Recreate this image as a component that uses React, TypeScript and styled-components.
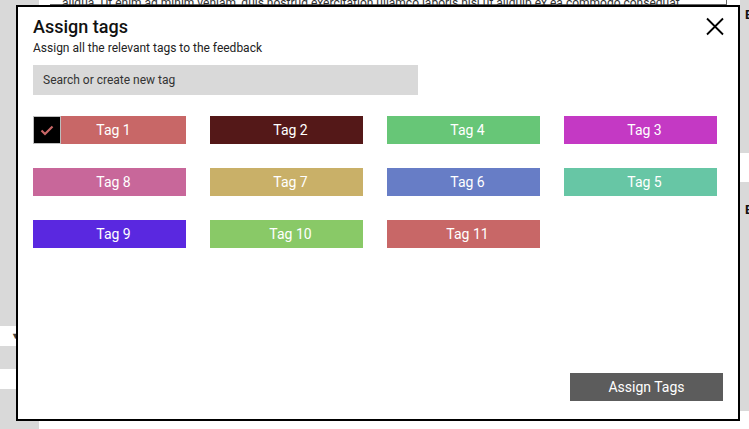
import React, { useState } from 'react'
import styled, { createGlobalStyle } from 'styled-components'

const GlobalStyle = createGlobalStyle`
  html, body { margin: 0; padding: 0; background: #fff; }
  body { font-family: Roboto, "Liberation Sans", sans-serif; overflow: hidden; }
  * { box-sizing: border-box; }
`

// background page (partly hidden behind the modal)
const Page = styled.div` display: flex; width: 100vw; height: 100vh; overflow: hidden; `
const Sidebar = styled.div`
  width: 39px; flex: 0 0 39px; background: #d9d9d9;
  display: flex; flex-direction: column; padding-top: 326px; gap: 23px;
`
const NavRow = styled.div`
  height: 20px; background: #fff; display: flex; align-items: center; padding-left: 11px;
  font-size: 9px; color: #444;
`
const Main = styled.div` width: 701px; flex: 0 0 701px; padding: 0 13px 0 11px; `
const TextBox = styled.div`
  margin-top: -10px; border-right: 1px solid #666; border-bottom: 1px solid #666; height: 15px;
  padding: 5px 0 0 12px; font-size: 12px; line-height: 16px; color: #333;
  white-space: nowrap;
`
const RightCol = styled.div` flex: 1; display: flex; flex-direction: column; gap: 29px; `
const SideCard = styled.div<{ $h: number; $top: number }>`
  height: ${p => p.$h}px; background: #d9d9d9; padding: ${p => p.$top}px 0 0 5px;
  font-size: 13px; font-weight: 700; color: #111; white-space: nowrap;
`

// modal
const Modal = styled.div`
  position: fixed; left: 16px; top: 5px; width: 724px; height: 416px;
  background: #fff; border: 2px solid #000;
  display: flex; flex-direction: column; padding: 9px 15px 18px 15px;
`
const Header = styled.div` display: flex; justify-content: space-between; align-items: flex-start; `
const Title = styled.h2` margin: 0; font-size: 18px; line-height: 22px; font-weight: 500; color: #111; `
const CloseButton = styled.button`
  background: none; border: none; padding: 0; margin: 1px -1px 0 0; cursor: pointer; display: flex;
`
const Subtitle = styled.p` margin: 3px 0 0; font-size: 12px; line-height: 14px; color: #222; `
const Search = styled.input`
  margin-top: 10px; width: 385px; height: 30px; border: none; background: #d9d9d9;
  padding: 0 10px; font-family: inherit; font-size: 12px; color: #222;
  &::placeholder { color: #333; }
  &:focus { outline: none; }
`
const TagGrid = styled.div`
  margin-top: 21px; display: grid; grid-template-columns: repeat(4, 153px);
  grid-auto-rows: 28px; gap: 24px;
`
const Tag = styled.button<{ $color: string }>`
  position: relative; border: none; margin: 0; background: ${p => p.$color};
  color: #fff; font-family: inherit; font-size: 14px; font-weight: 400;
  display: flex; align-items: center; justify-content: center; padding: 0 0 0 8px; cursor: pointer;
`
const Check = styled.span`
  position: absolute; left: 0; top: 0; width: 28px; height: 28px;
  background: #000; border: 1px solid #bdbdbd; display: flex; align-items: center; justify-content: center;
`
const Footer = styled.div` margin-top: auto; display: flex; justify-content: flex-end; `
const AssignButton = styled.button`
  width: 153px; height: 28px; border: none; background: #5c5c5c; color: #fff;
  font-family: inherit; font-size: 14px; font-weight: 400; cursor: pointer;
`

const tags = [
  { name: 'Tag 1', color: '#c86767' },
  { name: 'Tag 2', color: '#541818' },
  { name: 'Tag 4', color: '#67c677' },
  { name: 'Tag 3', color: '#c439c4' },
  { name: 'Tag 8', color: '#c8679a' },
  { name: 'Tag 7', color: '#c9b068' },
  { name: 'Tag 6', color: '#677dc6' },
  { name: 'Tag 5', color: '#67c6a5' },
  { name: 'Tag 9', color: '#5a28e0' },
  { name: 'Tag 10', color: '#89c967' },
  { name: 'Tag 11', color: '#c86767' },
]

export default function App() {
  const [selected, setSelected] = useState<string[]>(['Tag 1'])

  const toggle = (name: string) =>
    setSelected(s => (s.includes(name) ? s.filter(n => n !== name) : [...s, name]))

  return (
    <>
      <GlobalStyle />
      <Page>
        <Sidebar>
          <NavRow>▼</NavRow>
          <NavRow />
        </Sidebar>
        <Main>
          <TextBox>
            aliqua. Ut enim ad minim veniam, quis nostrud exercitation ullamco laboris nisi ut aliquip ex ea commodo consequat.
          </TextBox>
        </Main>
        <RightCol>
          <SideCard $h={153} $top={7}>B</SideCard>
          <SideCard $h={229} $top={20}>B</SideCard>
        </RightCol>
      </Page>

      <Modal>
        <Header>
          <Title>Assign tags</Title>
          <CloseButton aria-label="Close">
            <svg width="18" height="19" viewBox="0 0 18 19">
              <path d="M1 1.5L17 17.5M17 1.5L1 17.5" stroke="#000" strokeWidth="1.8" fill="none" />
            </svg>
          </CloseButton>
        </Header>
        <Subtitle>Assign all the relevant tags to the feedback</Subtitle>
        <Search placeholder="Search or create new tag" />
        <TagGrid>
          {tags.map(t => (
            <Tag key={t.name} $color={t.color} onClick={() => toggle(t.name)}>
              {selected.includes(t.name) && (
                <Check>
                  <svg width="14" height="11" viewBox="0 0 14 11">
                    <path d="M1.5 5.5L5 9L12.5 1.5" stroke={t.color} strokeWidth="2.2" fill="none" />
                  </svg>
                </Check>
              )}
              {t.name}
            </Tag>
          ))}
        </TagGrid>
        <Footer>
          <AssignButton>Assign Tags</AssignButton>
        </Footer>
      </Modal>
    </>
  )
}
